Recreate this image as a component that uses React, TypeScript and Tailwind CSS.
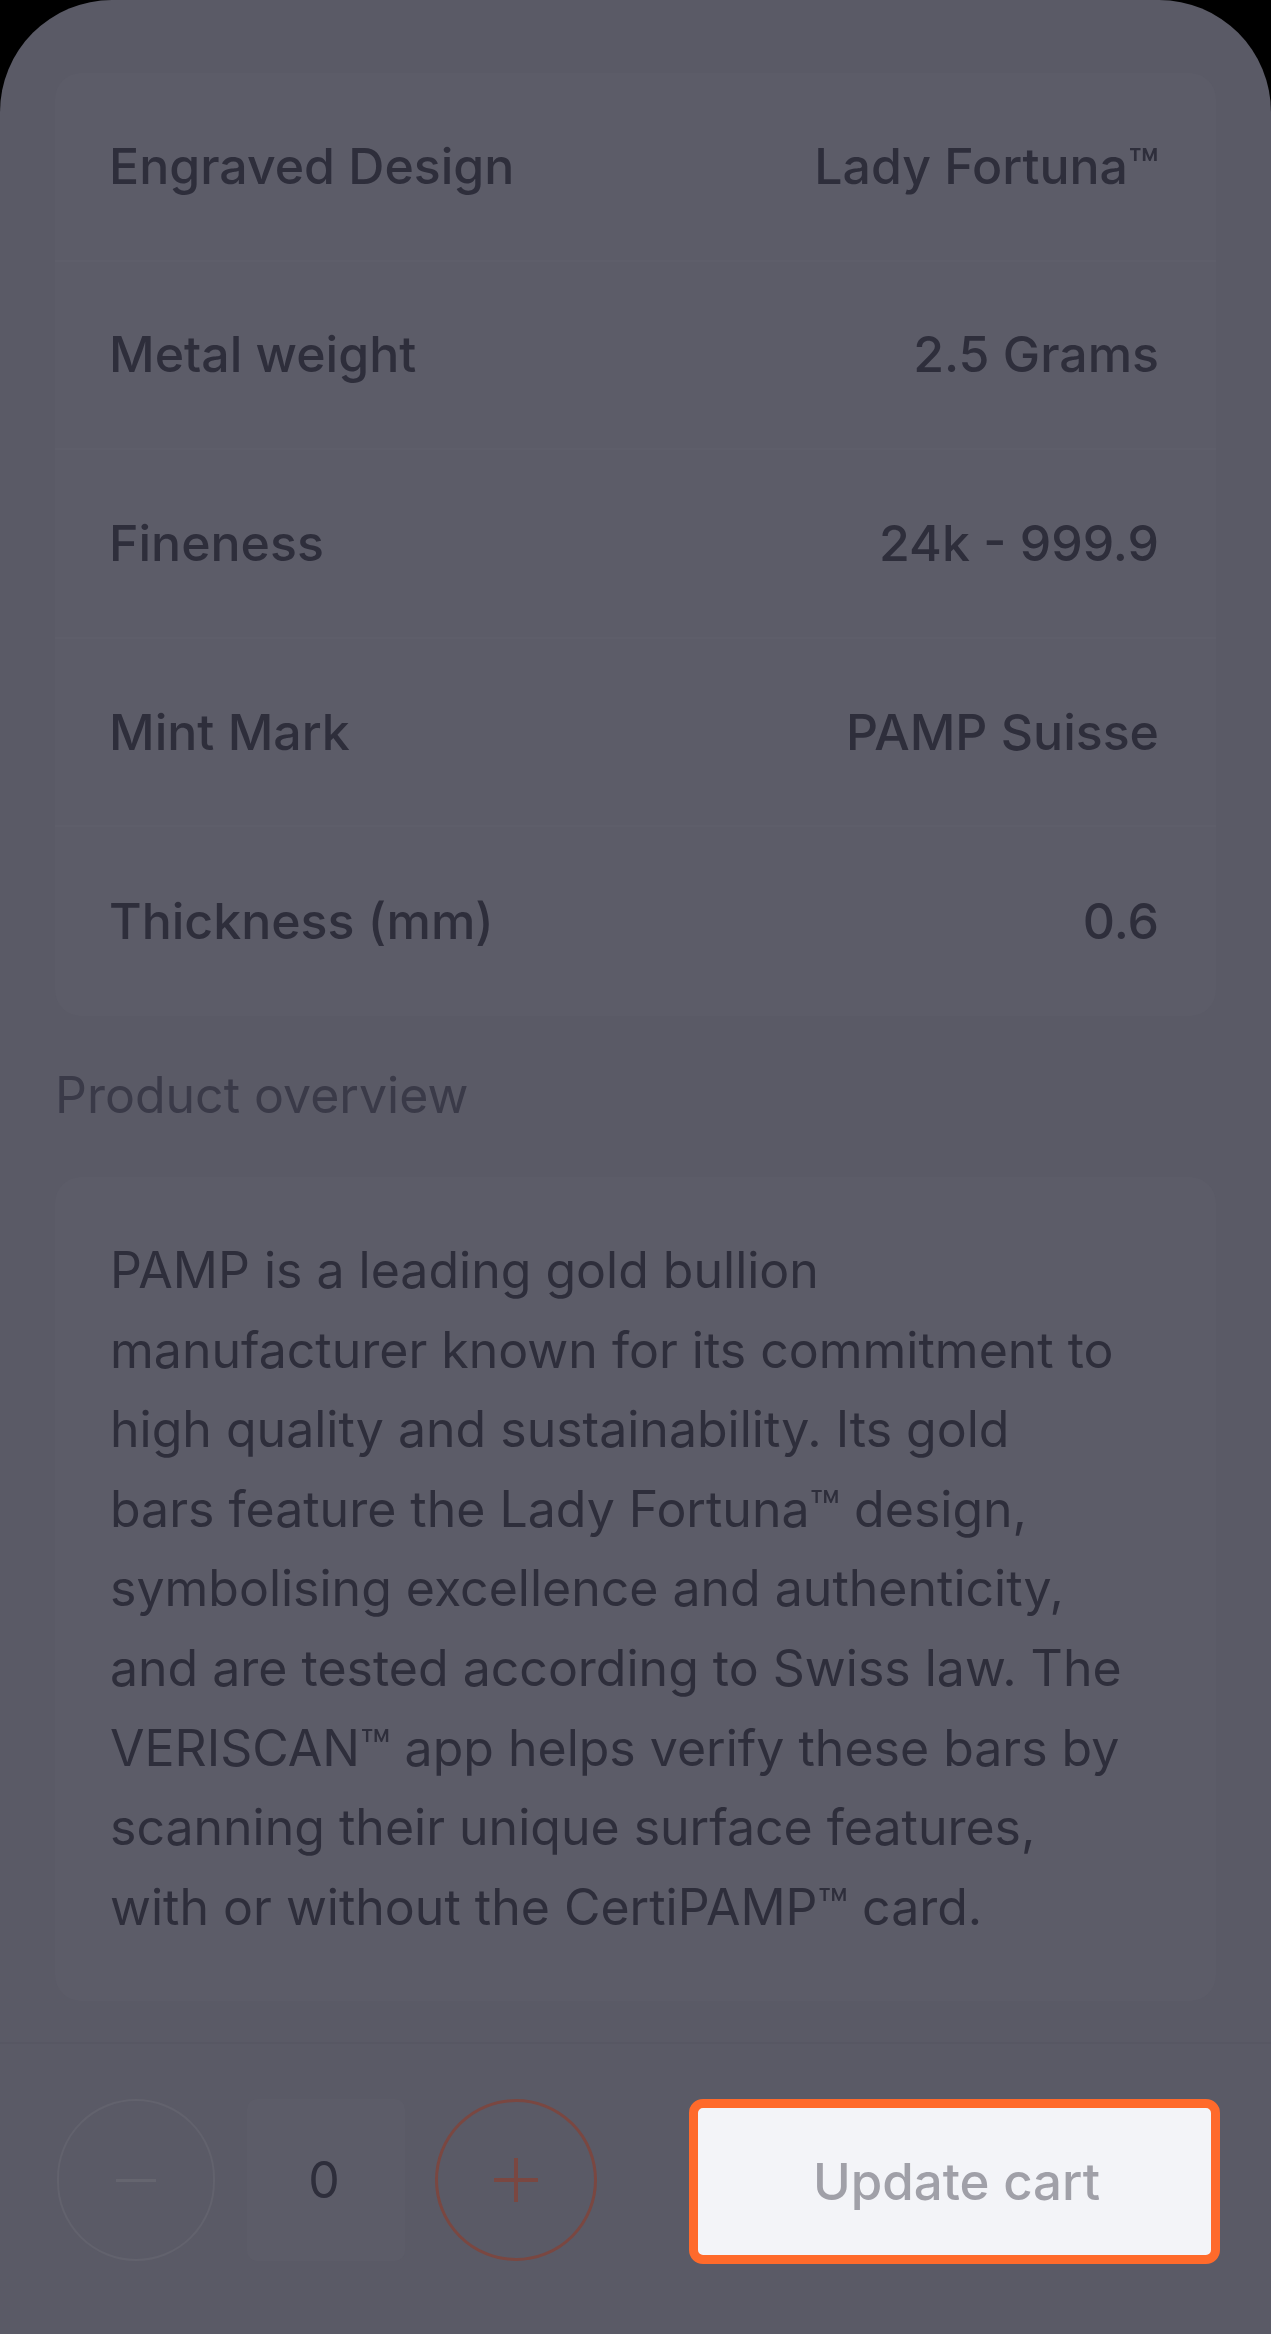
import React from 'react';

const specs = [
  { label: 'Engraved Design', value: 'Lady Fortuna™' },
  { label: 'Metal weight', value: '2.5 Grams' },
  { label: 'Fineness', value: '24k - 999.9' },
  { label: 'Mint Mark', value: 'PAMP Suisse' },
  { label: 'Thickness (mm)', value: '0.6' },
];

const overview = [
  'PAMP is a leading gold bullion',
  'manufacturer known for its commitment to',
  'high quality and sustainability. Its gold',
  'bars feature the Lady Fortuna™ design,',
  'symbolising excellence and authenticity,',
  'and are tested according to Swiss law. The',
  'VERISCAN™ app helps verify these bars by',
  'scanning their unique surface features,',
  'with or without the CertiPAMP™ card.',
];

const App = () => {
  return (
    <div className="bg-black min-h-[2334px] font-['Inter',_'Liberation_Sans',_sans-serif]">
      <div className="flex h-[2334px] flex-col rounded-t-[112px] bg-[#5a5a66] pt-[73px]">
        {/* spec table */}
        <div className="mx-[55px] overflow-hidden rounded-[26px] bg-[#5c5c68]">
          {specs.map((row, i) => (
            <div
              key={row.label}
              className={`flex h-[188.6px] items-center justify-between pl-[54px] pr-[57px] text-[50px] font-medium text-[#2e2e3b] ${
                i < specs.length - 1 ? 'border-b-2 border-[#5e5e6a]' : ''
              }`}
            >
              <span>{row.label}</span>
              <span>{row.value}</span>
            </div>
          ))}
        </div>

        <div className="mt-[49px] px-[55px] text-[50px] leading-[60px] text-[#3a3a48]">
          Product overview
        </div>

        {/* overview card */}
        <div className="mx-[55px] mt-[52px] rounded-[26px] bg-[#5c5c68] px-[55px] py-[54px] text-[50px] leading-[79.6px] text-[#2e2e3b]">
          {overview.map((line) => (
            <div key={line} className="whitespace-nowrap">
              {line}
            </div>
          ))}
        </div>

        {/* bottom bar */}
        <div className="mt-[41px] flex flex-1 items-start border-t-2 border-[#575763] pl-[57px] pr-[51px] pt-[55px]">
          <div className="flex h-[162px] w-[158px] items-center justify-center rounded-full border-2 border-[#62626d]">
            <span className="block h-[3px] w-[40px] bg-[#65656f]" />
          </div>
          <div className="ml-[32px] flex h-[162px] w-[158px] items-center justify-center rounded-[10px] bg-[#5c5c68] pr-[4px] text-[50px] text-[#2e2e3b]">
            0
          </div>
          <div className="relative ml-[30px] flex h-[162px] w-[162px] items-center justify-center rounded-full border-[3px] border-[#7a4741]">
            <span className="absolute h-[4px] w-[44px] bg-[#7a4741]" />
            <span className="absolute h-[44px] w-[4px] bg-[#7a4741]" />
          </div>
          <button className="ml-auto flex h-[165px] w-[531px] items-center justify-center rounded-[14px] border-[9px] border-[#ff6a2b] bg-[#f3f4f8] pl-[4px] text-[51px] font-medium text-[#a0a0a8]">
            Update cart
          </button>
        </div>
      </div>
    </div>
  );
};

export default App;
